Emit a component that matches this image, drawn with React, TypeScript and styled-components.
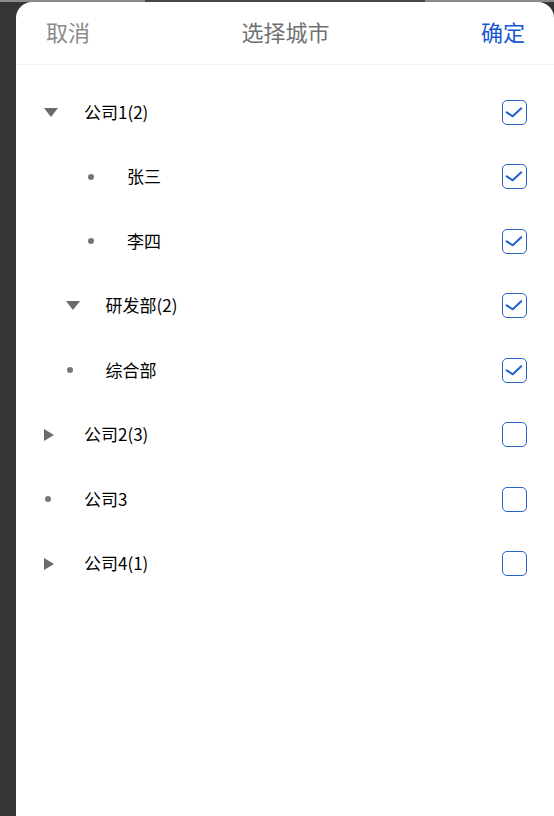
import { FC } from "react";
import styled, { createGlobalStyle } from "styled-components";

const GlobalStyle = createGlobalStyle`
  html, body {
    margin: 0;
    padding: 0;
    background: #353535;
  }
  body {
    font-family: "Noto Sans CJK SC", "Noto Sans", sans-serif;
  }
`;

type NodeKind = "open" | "closed" | "leaf";

interface TreeNode {
  label: string;
  level: number;
  kind: NodeKind;
  checked: boolean;
}

const nodes: TreeNode[] = [
  { label: "公司1(2)", level: 0, kind: "open", checked: true },
  { label: "张三", level: 2, kind: "leaf", checked: true },
  { label: "李四", level: 2, kind: "leaf", checked: true },
  { label: "研发部(2)", level: 1, kind: "open", checked: true },
  { label: "综合部", level: 1, kind: "leaf", checked: true },
  { label: "公司2(3)", level: 0, kind: "closed", checked: false },
  { label: "公司3", level: 0, kind: "leaf", checked: false },
  { label: "公司4(1)", level: 0, kind: "closed", checked: false },
];

const Backdrop = styled.div`
  min-height: 816px;
  box-sizing: border-box;
  padding: 2px 0 0 16px;
  background: linear-gradient(
      to bottom,
      #8a8a8a 0,
      #8a8a8a 2px,
      transparent 2px
    ),
    #353535;
`;

const TopStrip = styled.div`
  position: absolute;
  top: 0;
  left: 145px;
  width: 280px;
  height: 2px;
  background: #4a4440;
`;

const Sheet = styled.div`
  background: #fff;
  border-radius: 16px 16px 0 0;
  min-height: 814px;
  position: relative;
`;

const Header = styled.div`
  height: 63px;
  box-sizing: border-box;
  padding: 0 29px 4px 30px;
  border-bottom: 1px solid #f0f0f0;
  display: flex;
  align-items: center;
  justify-content: space-between;
`;

const HeaderButton = styled.span<{ $primary?: boolean }>`
  font-size: 22px;
  color: ${(p) => (p.$primary ? "#1659d4" : "#8a8a8a")};
`;

const Title = styled.span`
  font-size: 22px;
  color: #717171;
`;

const List = styled.div`
  padding-top: 15px;
  display: flex;
  flex-direction: column;
`;

const Row = styled.div<{ $level: number }>`
  height: 64.5px;
  display: flex;
  align-items: center;
  padding-left: ${(p) => 29 + p.$level * 21.5}px;
  padding-right: 27px;
`;

const IconSlot = styled.div`
  width: 40px;
  margin-left: -1px;
  flex-shrink: 0;
  display: flex;
  align-items: center;
`;

const Dot = styled.span`
  display: block;
  width: 6px;
  height: 6px;
  border-radius: 50%;
  background: #777;
  margin-left: 1px;
`;

const Label = styled.span`
  flex: 1;
  font-size: 17px;
  color: #000;
  margin-top: -2px;
`;

const Box = styled.div`
  width: 23px;
  height: 23px;
  border: 1px solid #2863c9;
  border-radius: 5px;
  display: flex;
  align-items: center;
  justify-content: center;
`;

const Caret: FC<{ open: boolean }> = ({ open }) =>
  open ? (
    <svg width="14" height="9" viewBox="0 0 14 9">
      <polygon points="0,0 14,0 7,9" fill="#6b6b6b" />
    </svg>
  ) : (
    <svg width="10" height="12" viewBox="0 0 10 12">
      <polygon points="0,0 10,6 0,12" fill="#6b6b6b" />
    </svg>
  );

const Check: FC<{ checked: boolean }> = ({ checked }) => (
  <Box>
    {checked && (
      <svg width="23" height="23" viewBox="0 0 23 23">
        <polyline
          points="3.7,11.3 9.7,15.3 18.3,7.3"
          fill="none"
          stroke="#1f5fd0"
          strokeWidth="2"
          strokeLinecap="round"
          strokeLinejoin="round"
        />
      </svg>
    )}
  </Box>
);

const TreeRow: FC<{ node: TreeNode }> = ({ node }) => (
  <Row $level={node.level}>
    <IconSlot>
      {node.kind === "leaf" ? <Dot /> : <Caret open={node.kind === "open"} />}
    </IconSlot>
    <Label>{node.label}</Label>
    <Check checked={node.checked} />
  </Row>
);

export default function App() {
  return (
    <>
      <GlobalStyle />
      <Backdrop>
        <TopStrip />
        <Sheet>
          <Header>
            <HeaderButton>取消</HeaderButton>
            <Title>选择城市</Title>
            <HeaderButton $primary>确定</HeaderButton>
          </Header>
          <List>
            {nodes.map((n) => (
              <TreeRow key={n.label} node={n} />
            ))}
          </List>
        </Sheet>
      </Backdrop>
    </>
  );
}
